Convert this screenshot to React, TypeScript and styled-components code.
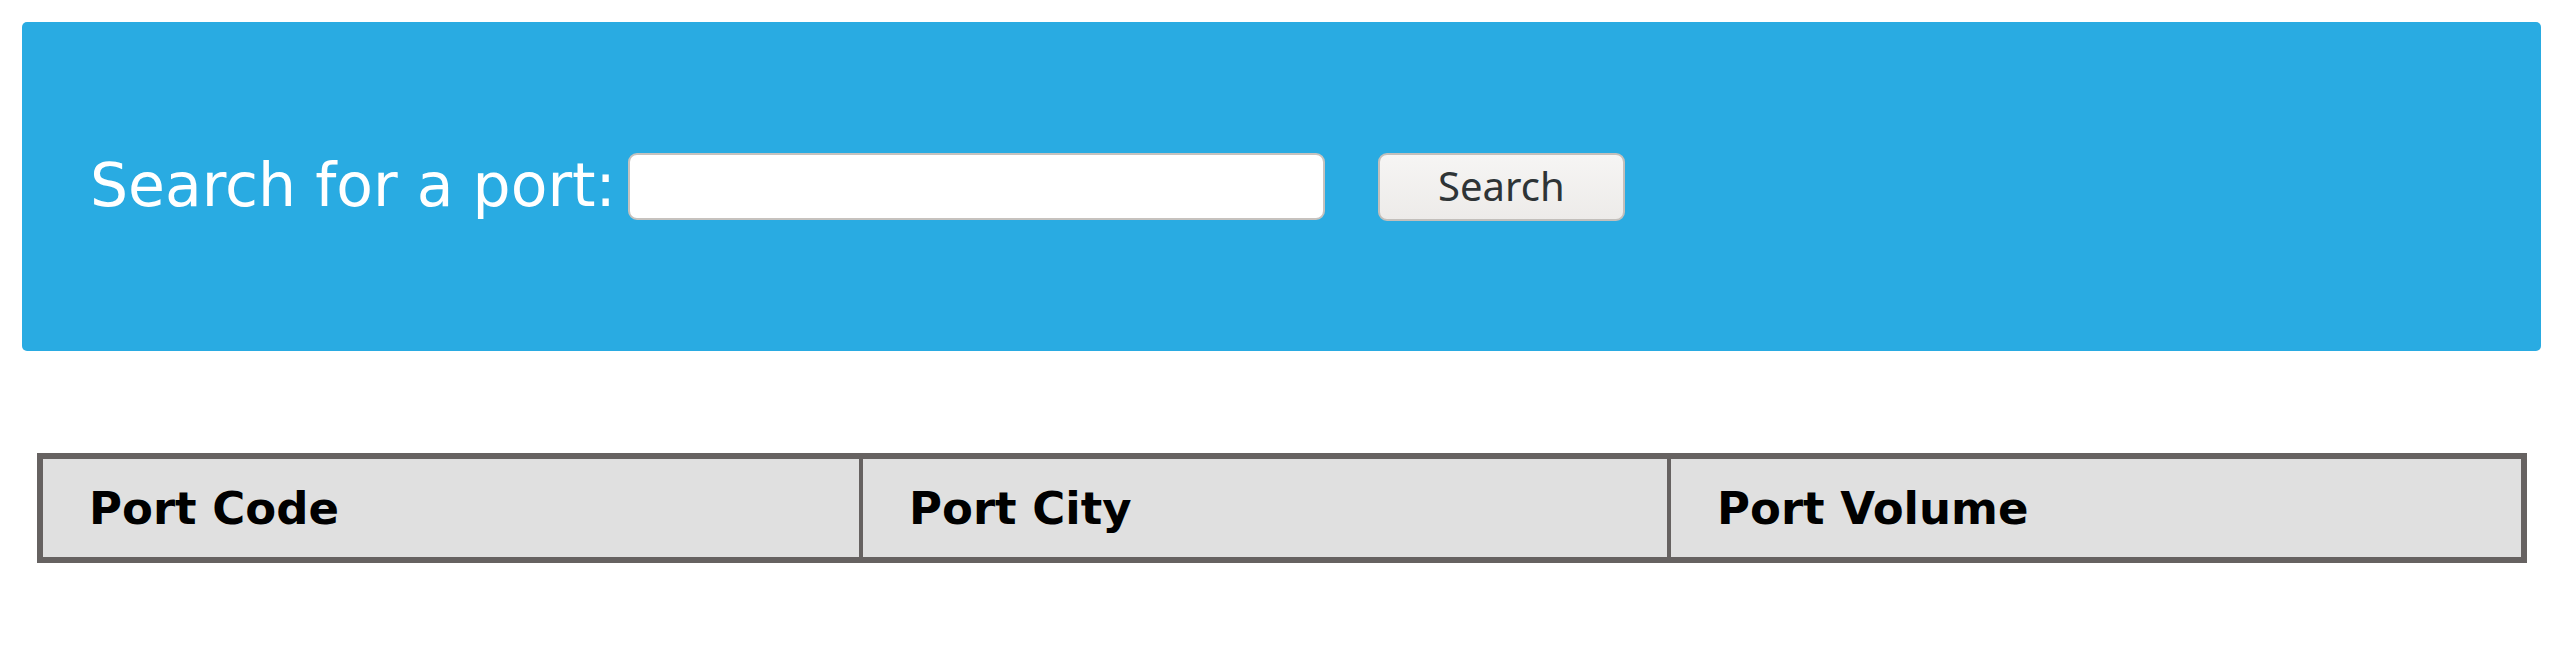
import React from 'react';
import styled, { createGlobalStyle } from 'styled-components';

const GlobalStyle = createGlobalStyle`
  html,
  body {
    margin: 0;
    padding: 0;
    background: #ffffff;
  }

  body {
    font-family: 'DejaVu Sans', sans-serif;
  }
`;

const Page = styled.div`
  padding: 22px 20px 0 22px;
`;

/**
 * Search banner
 *
 */
const SearchBanner = styled.section`
  display: flex;
  align-items: center;
  height: 329px;
  padding: 0 68px;
  box-sizing: border-box;

  background: #29abe2;
  border-radius: 5px;
`;

const SearchForm = styled.form`
  display: flex;
  align-items: center;
  margin: 0;
`;

const SearchLabel = styled.label`
  font-family: 'DejaVu Sans', sans-serif;
  font-size: 60px;
  line-height: 1;
  color: #ffffff;
  margin-right: 12px;
  position: relative;
  top: -2px;
`;

const SearchInput = styled.input`
  width: 697px;
  height: 67px;
  box-sizing: border-box;
  padding: 0 12px;

  background: #ffffff;
  border: 2px solid #c6c2be;
  border-radius: 9px;
  font-family: 'Noto Sans', sans-serif;
  font-size: 36px;
  outline: none;
`;

const SearchButton = styled.button`
  width: 247px;
  height: 68px;
  margin-left: 53px;
  box-sizing: border-box;
  padding: 0 0 2px 0;

  background: linear-gradient(to bottom, #f6f5f4, #edebe9);
  border: 2px solid #c3bfbb;
  border-radius: 9px;
  color: #2e3436;
  font-family: 'Noto Sans', sans-serif;
  font-size: 40px;
  cursor: pointer;
`;

/**
 * Ports table
 *
 */
const TableWrapper = styled.div`
  margin: 102px 14px 0 15px;
`;

const PortsTable = styled.table`
  width: 100%;
  table-layout: fixed;
  border-collapse: separate;
  border-spacing: 0;
  border: 6px solid #666261;
  background: #e0e0e0;
`;

const HeaderCell = styled.th<{ $width: number; $first?: boolean }>`
  width: ${(props) => props.$width}px;
  height: 98px;
  box-sizing: border-box;
  padding: 0 0 0 ${(props) => (props.$first ? 46 : 46)}px;

  border-left: ${(props) => (props.$first ? 'none' : '4px solid #666261')};
  text-align: left;
  font-family: 'DejaVu Sans', sans-serif;
  font-weight: bold;
  font-size: 45px;
  color: #000000;
`;

const columns = [
  { label: 'Port Code', width: 816 },
  { label: 'Port City', width: 808 },
  { label: 'Port Volume', width: 854 },
];

const App: React.FC = () => {
  return (
    <Page>
      <GlobalStyle />
      <SearchBanner>
        <SearchForm onSubmit={(e) => e.preventDefault()}>
          <SearchLabel htmlFor="port-search">Search for a port:</SearchLabel>
          <SearchInput id="port-search" type="text" />
          <SearchButton type="submit">Search</SearchButton>
        </SearchForm>
      </SearchBanner>
      <TableWrapper>
        <PortsTable>
          <thead>
            <tr>
              {columns.map((column, index) => (
                <HeaderCell
                  key={column.label}
                  $width={column.width}
                  $first={index === 0}
                >
                  {column.label}
                </HeaderCell>
              ))}
            </tr>
          </thead>
        </PortsTable>
      </TableWrapper>
    </Page>
  );
};

export default App;
